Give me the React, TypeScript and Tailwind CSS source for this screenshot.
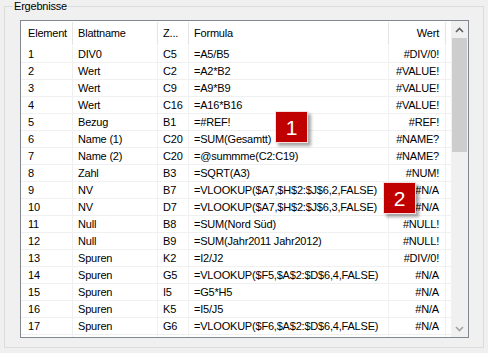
const rows: [string, string, string, string, string][] = [
  ["1", "DIV0", "C5", "=A5/B5", "#DIV/0!"],
  ["2", "Wert", "C2", "=A2*B2", "#VALUE!"],
  ["3", "Wert", "C9", "=A9*B9", "#VALUE!"],
  ["4", "Wert", "C16", "=A16*B16", "#VALUE!"],
  ["5", "Bezug", "B1", "=#REF!", "#REF!"],
  ["6", "Name (1)", "C20", "=SUM(Gesamtt)", "#NAME?"],
  ["7", "Name (2)", "C20", "=@summme(C2:C19)", "#NAME?"],
  ["8", "Zahl", "B3", "=SQRT(A3)", "#NUM!"],
  ["9", "NV", "B7", "=VLOOKUP($A7,$H$2:$J$6,2,FALSE)", "#N/A"],
  ["10", "NV", "D7", "=VLOOKUP($A7,$H$2:$J$6,3,FALSE)", "#N/A"],
  ["11", "Null", "B8", "=SUM(Nord Süd)", "#NULL!"],
  ["12", "Null", "B9", "=SUM(Jahr2011 Jahr2012)", "#NULL!"],
  ["13", "Spuren", "K2", "=I2/J2", "#DIV/0!"],
  ["14", "Spuren", "G5", "=VLOOKUP($F5,$A$2:$D$6,4,FALSE)", "#N/A"],
  ["15", "Spuren", "I5", "=G5*H5", "#N/A"],
  ["16", "Spuren", "K5", "=I5/J5", "#N/A"],
  ["17", "Spuren", "G6", "=VLOOKUP($F6,$A$2:$D$6,4,FALSE)", "#N/A"],
  // partially scrolled-in row, only its grid lines show
  ["", "", "", "", ""],
]

const cols = "grid grid-cols-[52px_85px_31px_200px_57px_4px]"

const Badge = ({ n, pos }: { n: string, pos: string }) => (
  <div className={`absolute ${pos} w-[33px] h-[32px] bg-[#c00000] border border-[#f4dede] shadow-[3px_3px_3px_rgba(0,0,0,0.35)] flex items-center justify-center text-white text-[21px] font-light leading-none tracking-normal`}>
    {n}
  </div>
)

export default function App() {
  return (
    <div className="w-[488px] h-[353px] bg-[#f0f0f0] pt-[6px] px-[4px] text-[11px] tracking-[-0.2px] text-black [font-family:'Liberation_Sans',Arial,sans-serif]">
      <div className="relative h-[342px] border border-[#dcdcdc] pt-[13px] pl-[15px]">
        <span className="absolute left-[8px] -top-[8px] bg-[#f0f0f0] px-[1px] leading-[14px]">Ergebnisse</span>

        <div className="w-[449px] h-[318px] border border-[#828790] bg-white flex overflow-hidden">
          <div className="w-[430px] flex flex-col">
            {/* header */}
            <div className={`${cols} h-[25px] shrink-0`}>
              <div className="pl-[7px] flex items-center border-r border-[#e5e5e5] my-[1px]">Element</div>
              <div className="pl-[5px] flex items-center border-r border-[#e5e5e5] my-[1px]">Blattname</div>
              <div className="pl-[5px] flex items-center border-r border-[#e5e5e5] my-[1px]">Z...</div>
              <div className="pl-[5px] flex items-center border-r border-[#e5e5e5] my-[1px]">Formula</div>
              <div className="pr-[6px] flex items-center justify-end border-r border-[#e5e5e5] my-[1px]">Wert</div>
              <div />
            </div>
            {rows.map((r, i) => (
              <div key={i} className={`${cols} h-[17px] shrink-0 border-b border-[#f0f0f0] leading-[16px]`}>
                <div className="pl-[7px] border-r border-[#f0f0f0] whitespace-nowrap">{r[0]}</div>
                <div className="pl-[5px] border-r border-[#f0f0f0] whitespace-nowrap">{r[1]}</div>
                <div className="pl-[5px] border-r border-[#f0f0f0] whitespace-nowrap">{r[2]}</div>
                <div className="pl-[5px] border-r border-[#f0f0f0] whitespace-nowrap overflow-hidden">{r[3]}</div>
                <div className="pr-[6px] text-right border-r border-[#f0f0f0] whitespace-nowrap">{r[4]}</div>
                <div />
              </div>
            ))}
          </div>

          {/* scrollbar */}
          <div className="w-[17px] bg-[#f0f0f0] flex flex-col">
            <div className="h-[17px] flex items-center justify-center text-[#606060]">
              <svg width="9" height="6" viewBox="0 0 9 6" fill="none" stroke="currentColor" strokeWidth="1.6">
                <path d="M1 5l3.5-3.5L8 5" />
              </svg>
            </div>
            <div className="mx-[1px] h-[114px] bg-[#cdcdcd]" />
            <div className="flex-1" />
            <div className="h-[17px] flex items-center justify-center text-[#a3a3a3]">
              <svg width="9" height="6" viewBox="0 0 9 6" fill="none" stroke="currentColor" strokeWidth="1.6">
                <path d="M1 1l3.5 3.5L8 1" />
              </svg>
            </div>
          </div>
        </div>

        <Badge n="1" pos="left-[270px] top-[104px]" />
        <Badge n="2" pos="left-[378px] top-[175px]" />
      </div>
    </div>
  )
}
